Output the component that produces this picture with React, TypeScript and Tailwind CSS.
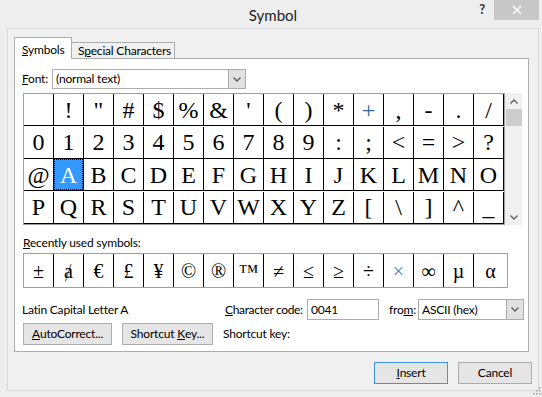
import React from "react"

const ui = { fontFamily: 'Lato, "Open Sans", sans-serif' }
const serif = { fontFamily: '"Liberation Serif", "DejaVu Serif", serif' }

const GRID: string[] = Array.from({ length: 64 }, (_, i) => String.fromCharCode(32 + i))
const RECENT = ["±", "ⱥ", "€", "£", "¥", "©", "®", "™", "≠", "≤", "≥", "÷", "×", "∞", "µ", "α"]

function Chevron({ up = false, color = "#606060" }: { up?: boolean; color?: string }) {
  return (
    <svg width="8" height="5" viewBox="0 0 8 5" fill="none" stroke={color} strokeWidth="1.4">
      {up ? <polyline points="0.5,4.5 4,1 7.5,4.5" /> : <polyline points="0.5,0.5 4,4 7.5,0.5" />}
    </svg>
  )
}

function Btn({ children, className = "" }: { children: React.ReactNode; className?: string }) {
  return (
    <button
      className={`h-[22px] flex items-center justify-center border bg-[#e5e5e5] text-[12px] tracking-[-0.2px] text-black whitespace-nowrap ${className}`}
      style={ui}
    >
      {children}
    </button>
  )
}

export default function App() {
  return (
    <div
      className="w-[542px] h-[397px] bg-[#eeeeee] overflow-hidden relative text-black whitespace-nowrap tracking-[-0.2px]"
      style={ui}
    >
      {/* title bar */}
      <div className="h-[28px] grid grid-cols-[1fr_auto_1fr]">
        <div />
        <div className="text-[15px] text-[#222] pt-[4px] pl-[4px] tracking-normal">Symbol</div>
        <div className="flex justify-end items-start pr-[3px]">
          <span className="text-[13px] font-bold text-[#333] mr-[9px] leading-none pt-[3px]">?</span>
          <div className="w-[45px] h-[20px] bg-[#c7c7c7] flex items-center justify-center">
            <svg width="10" height="10" viewBox="0 0 10 10" stroke="white" strokeWidth="1.4">
              <line x1="1" y1="1" x2="9" y2="9" />
              <line x1="9" y1="1" x2="1" y2="9" />
            </svg>
          </div>
        </div>
      </div>

      {/* client area */}
      <div className="ml-[7px] w-[532px] h-[363px] border border-[#d9d9d9] bg-[#f0f0f0] pl-[6px] pt-[7px]">
        {/* tabs */}
        <div className="flex items-end h-[22px]">
          <div className="relative z-10 h-[22px] w-[58px] bg-white border-l border-t border-r border-[#acacac] mb-[-1px] pl-[7px] pt-[3px] text-[12px]">
            <span className="underline">S</span>ymbols
          </div>
          <div className="h-[16px] w-[103px] border-t border-r border-[#acacac] pl-[6px] text-[12px] leading-[15px]">
            S<span className="underline">p</span>ecial Characters
          </div>
        </div>

        {/* panel */}
        <div className="w-[515px] h-[294px] bg-white border border-[#acacac] pl-[7px] pt-[10px]">
          <div className="flex items-center h-[20px]">
            <span className="w-[30px] text-[12px]">
              <span className="underline">F</span>ont:
            </span>
            <div className="w-[194px] h-[20px] border border-[#acacac] flex items-center">
              <span className="flex-1 pl-[3px] text-[12px]">(normal text)</span>
              <div className="w-[17px] h-[18px] bg-[#e1e1e1] border-l border-[#acacac] flex items-center justify-center">
                <Chevron />
              </div>
            </div>
          </div>

          {/* character grid */}
          <div className="flex mt-[4px] ml-[1px]">
            <div className="grid grid-cols-[repeat(16,30px)] border border-[#a0a0a0] tracking-normal" style={serif}>
              {GRID.map((ch, i) => {
                const sel = ch === "A"
                return (
                  <div
                    key={i}
                    className={`h-[32px] border-r border-b border-black text-[24px] leading-none ${
                      sel ? "bg-[#3399ff] text-white" : ""
                    }`}
                  >
                    <div
                      className={`w-full h-full flex items-center justify-center ${
                        sel ? "border border-dotted border-black" : ""
                      } ${ch === "+" ? "text-[#2f5f9f]" : ""}`}
                    >
                      {ch}
                    </div>
                  </div>
                )
              })}
            </div>
            <div className="w-[17px] h-[132px] bg-[#f0f0f0] flex flex-col items-center">
              <div className="h-[16px] flex items-center justify-center">
                <Chevron up />
              </div>
              <div className="w-[16px] h-[17px] bg-[#cdcdcd]" />
              <div className="flex-1" />
              <div className="h-[16px] flex items-center justify-center">
                <Chevron />
              </div>
            </div>
          </div>

          {/* recently used */}
          <div className="mt-[10px] ml-[1px] text-[12px] h-[16px] leading-[16px]">
            <span className="underline">R</span>ecently used symbols:
          </div>
          <div
            className="mt-[2px] ml-[1px] w-[485px] h-[35px] border border-[#a0a0a0] flex tracking-normal"
            style={serif}
          >
            {RECENT.map((ch, i) => (
              <div
                key={i}
                className={`h-full flex items-center justify-center text-[20px] leading-none ${
                  i < 15 ? "w-[30px] border-r border-black" : "flex-1"
                } ${ch === "×" ? "text-[#4a88c8]" : ""}`}
              >
                {ch}
              </div>
            ))}
          </div>

          {/* info */}
          <div className="mt-[11px] h-[21px] flex items-center text-[12px]">
            <span className="w-[203px]">Latin Capital Letter A</span>
            <span className="w-[82px] tracking-[-0.35px]">
              <span className="underline">C</span>haracter code:
            </span>
            <div className="w-[72px] h-[21px] border border-[#acacac] flex items-center pl-[3px]">0041</div>
            <span className="ml-[10px] w-[29px]">
              fro<span className="underline">m</span>:
            </span>
            <div className="w-[106px] h-[21px] border border-[#acacac] flex items-center">
              <span className="flex-1 pl-[3px]">ASCII (hex)</span>
              <div className="w-[17px] h-[19px] bg-[#e1e1e1] border-l border-[#acacac] flex items-center justify-center">
                <Chevron />
              </div>
            </div>
          </div>
          <div className="mt-[3px] flex items-center">
            <Btn className="ml-[1px] w-[89px] border-[#adadad]">
              <span className="underline">A</span>utoCorrect...
            </Btn>
            <Btn className="ml-[10px] w-[91px] border-[#adadad]">
              Shortcut&nbsp;<span className="underline">K</span>ey...
            </Btn>
            <span className="ml-[10px] text-[12px]">Shortcut key:</span>
          </div>
        </div>

        {/* dialog buttons */}
        <div className="mt-[10px] flex justify-end pr-[6px]">
          <Btn className="w-[74px] border-[#3d95e8]">
            <span className="underline">I</span>nsert
          </Btn>
          <Btn className="ml-[10px] w-[74px] border-[#adadad]">Cancel</Btn>
        </div>
      </div>

      {/* resize grip */}
      <svg className="absolute right-[1px] bottom-[2px]" width="10" height="10" viewBox="0 0 10 10" fill="#a0a0a0">
        <rect x="8" y="2" width="1.5" height="1.5" />
        <rect x="5" y="5" width="1.5" height="1.5" />
        <rect x="8" y="5" width="1.5" height="1.5" />
        <rect x="2" y="8" width="1.5" height="1.5" />
        <rect x="5" y="8" width="1.5" height="1.5" />
        <rect x="8" y="8" width="1.5" height="1.5" />
      </svg>
    </div>
  )
}
